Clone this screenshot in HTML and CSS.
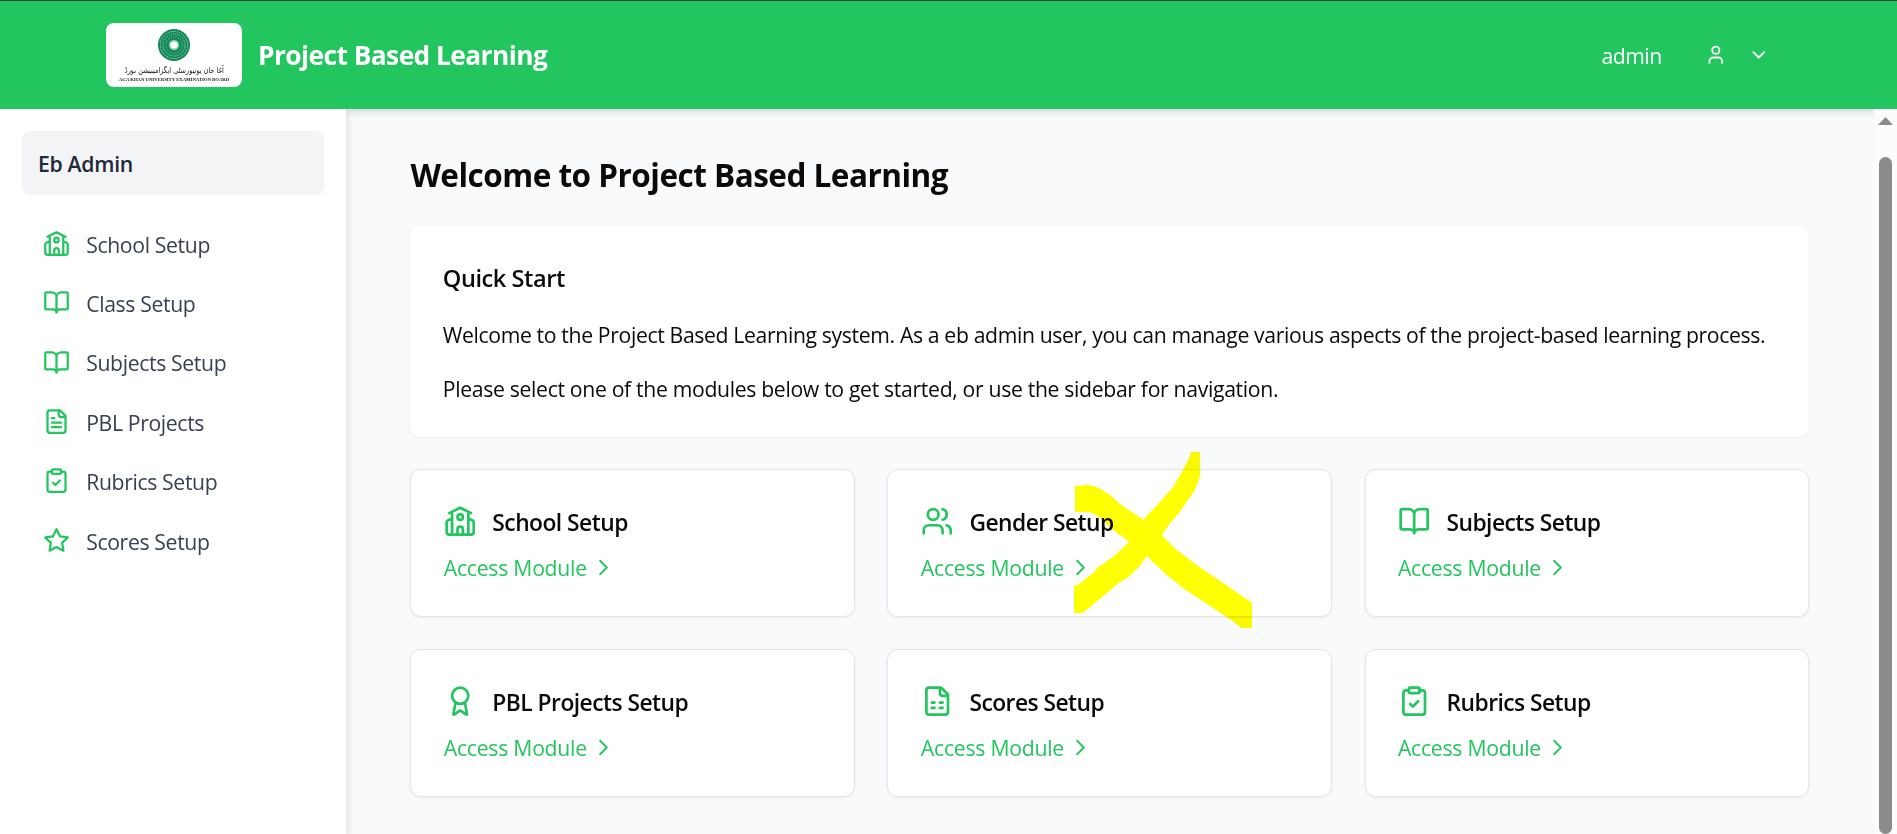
FILE: index.html
```html
<!DOCTYPE html>
<html lang="en">
<head>
<meta charset="utf-8">
<title>Project Based Learning</title>
<link rel="stylesheet" href="styles.css">
</head>
<body>
<svg class="defs" width="0" height="0" aria-hidden="true">
  <symbol id="school" viewBox="0 0 24 24"><path d="m4 6 8-4 8 4M18 10l3 1.3a1.6 1.6 0 0 1 1 1.500V20a2 2 0 0 1-2 2H4a2 2 0 0 1-2-2v-7.200a1.600 1.600 0 0 1 1-1.500L6 10M14 22v-4a2 2 0 0 0-4 0v4M18 5v17M6 5v17"/><circle cx="12" cy="9" r="2"/></symbol>
  <symbol id="book" viewBox="0 0 24 24"><path d="M12 7v14M3 18a1 1 0 0 1-1-1V4a1 1 0 0 1 1-1h5a4 4 0 0 1 4 4 4 4 0 0 1 4-4h5a1 1 0 0 1 1 1v13a1 1 0 0 1-1 1h-6a3 3 0 0 0-3 3 3 3 0 0 0-3-3z"/></symbol>
  <symbol id="file-text" viewBox="0 0 24 24"><path d="M15 2H6a2 2 0 0 0-2 2v16a2 2 0 0 0 2 2h12a2 2 0 0 0 2-2V7ZM14 2v4a2 2 0 0 0 2 2h4M10 9H8M16 13H8M16 17H8"/></symbol>
  <symbol id="sheet" viewBox="0 0 24 24"><path d="M15 2H6a2 2 0 0 0-2 2v16a2 2 0 0 0 2 2h12a2 2 0 0 0 2-2V7ZM14 2v4a2 2 0 0 0 2 2h4M8 13h2M14 13h2M8 17h2M14 17h2"/></symbol>
  <symbol id="clipboard" viewBox="0 0 24 24"><rect x="8" y="2" width="8" height="4" rx="1"/><path d="M16 4h2a2 2 0 0 1 2 2v14a2 2 0 0 1-2 2H6a2 2 0 0 1-2-2V6a2 2 0 0 1 2-2h2M9 14l2 2 4-4"/></symbol>
  <symbol id="star" viewBox="0 0 24 24"><polygon points="12 2 15.09 8.26 22 9.27 17 14.14 18.18 21.02 12 17.77 5.82 21.02 7 14.14 2 9.27 8.91 8.26"/></symbol>
  <symbol id="users" viewBox="0 0 24 24"><path d="M16 21v-2a4 4 0 0 0-4-4H6a4 4 0 0 0-4 4v2M22 21v-2a4 4 0 0 0-3-3.870M16 3.130a4 4 0 0 1 0 7.750"/><circle cx="9" cy="7" r="4"/></symbol>
  <symbol id="award" viewBox="0 0 24 24"><path d="m15.477 12.890 1.515 8.526a.5.5 0 0 1-.81.47l-3.580-2.687a1 1 0 0 0-1.197 0l-3.586 2.686a.5.5 0 0 1-.81-.469l1.514-8.526"/><circle cx="12" cy="8" r="6"/></symbol>
  <symbol id="user" viewBox="0 0 24 24"><path d="M19 21v-2a4 4 0 0 0-4-4H9a4 4 0 0 0-4 4v2"/><circle cx="12" cy="7" r="4"/></symbol>
  <symbol id="down" viewBox="0 0 24 24"><path d="m6 9 6 6 6-6"/></symbol>
  <symbol id="right" viewBox="0 0 24 24"><path d="m9 18 6-6-6-6"/></symbol>
</svg>

<header class="header">
  <div class="logo">
    <svg class="seal" width="32" height="32" viewBox="52 5.700 32 32">
      <circle cx="68" cy="21.700" r="16" fill="#128a57"/>
      <g fill="none" stroke="#b5dccb" stroke-width="1">
        <circle cx="68" cy="21.700" r="13.600" stroke-dasharray="1.200 1.100"/>
        <circle cx="68" cy="21.700" r="11" stroke-dasharray="1 1.200"/>
        <circle cx="68" cy="21.700" r="8.200" stroke-width=".7" stroke-dasharray="1 1.500"/>
      </g>
      <circle cx="68" cy="21.700" r="5.200" fill="#8ccbb0"/>
      <circle cx="68" cy="21.700" r="3.500" fill="#fff"/>
    </svg>
    <div class="logo-urdu" dir="rtl" lang="ur">آغا خان یونیورسٹی ایگزامینیشن بورڈ</div>
    <div class="logo-name">AGA KHAN UNIVERSITY EXAMINATION BOARD</div>
  </div>
  <div class="brand">Project Based Learning</div>
  <div class="account">
    <span class="account-name">admin</span>
    <svg class="icon icon-sm"><use href="#user"/></svg>
    <svg class="icon icon-sm"><use href="#down"/></svg>
  </div>
</header>

<div class="body">
  <aside class="sidebar">
    <div class="role">Eb Admin</div>
    <nav class="nav">
      <a class="nav-item"><svg class="icon icon-md"><use href="#school"/></svg><span>School Setup</span></a>
      <a class="nav-item"><svg class="icon icon-md"><use href="#book"/></svg><span>Class Setup</span></a>
      <a class="nav-item"><svg class="icon icon-md"><use href="#book"/></svg><span>Subjects Setup</span></a>
      <a class="nav-item"><svg class="icon icon-md"><use href="#file-text"/></svg><span>PBL Projects</span></a>
      <a class="nav-item"><svg class="icon icon-md"><use href="#clipboard"/></svg><span>Rubrics Setup</span></a>
      <a class="nav-item"><svg class="icon icon-md"><use href="#star"/></svg><span>Scores Setup</span></a>
    </nav>
  </aside>

  <main class="main">
    <h1 class="title">Welcome to Project Based Learning</h1>
    <section class="intro">
      <h2 class="intro-title">Quick Start</h2>
      <p class="intro-text">Welcome to the Project Based Learning system. As a eb admin user, you can manage various aspects of the project-based learning process.</p>
      <p class="intro-text intro-hint">Please select one of the modules below to get started, or use the sidebar for navigation.</p>
    </section>
    <section class="modules">
      <article class="card"><h3 class="card-title"><svg class="icon icon-lg"><use href="#school"/></svg><span>School Setup</span></h3><a class="card-link"><span>Access Module</span><svg class="icon icon-link"><use href="#right"/></svg></a></article>
      <article class="card"><h3 class="card-title"><svg class="icon icon-lg"><use href="#users"/></svg><span>Gender Setup</span></h3><a class="card-link"><span>Access Module</span><svg class="icon icon-link"><use href="#right"/></svg></a>
        <svg class="cross" viewBox="0 0 600 600"><path d="M15 138L30 137Q60 131 85 143L120 165 150 192 220 239 275 180 310 140 340 88 355 60 363 36H390V110L375 150 325 222 300 250 275 286 320 330 380 375 546 488V564H515L480 538 340 445 290 405 230 348 210 378 175 412 145 430 60 502 38 519H12V438L22 436 70 398 82 383 130 350 178 305 130 270 80 226 57 216H15Z"/></svg>
      </article>
      <article class="card"><h3 class="card-title"><svg class="icon icon-lg"><use href="#book"/></svg><span>Subjects Setup</span></h3><a class="card-link"><span>Access Module</span><svg class="icon icon-link"><use href="#right"/></svg></a></article>
      <article class="card"><h3 class="card-title"><svg class="icon icon-lg"><use href="#award"/></svg><span>PBL Projects Setup</span></h3><a class="card-link"><span>Access Module</span><svg class="icon icon-link"><use href="#right"/></svg></a></article>
      <article class="card"><h3 class="card-title"><svg class="icon icon-lg"><use href="#sheet"/></svg><span>Scores Setup</span></h3><a class="card-link"><span>Access Module</span><svg class="icon icon-link"><use href="#right"/></svg></a></article>
      <article class="card"><h3 class="card-title"><svg class="icon icon-lg"><use href="#clipboard"/></svg><span>Rubrics Setup</span></h3><a class="card-link"><span>Access Module</span><svg class="icon icon-link"><use href="#right"/></svg></a></article>
    </section>
  </main>

  <div class="scrollbar"><div class="scroll-up"></div><div class="scroll-thumb"></div></div>
</div>
</body>
</html>
```
FILE: styles.css
```css
* { box-sizing: border-box; margin: 0; }
body {
  height: 834px;
  overflow: hidden;
  display: flex;
  flex-direction: column;
  border-top: 1px solid #3f4143;
  background: #f9fafb;
  color: #0c0a09;
  font: 400 21.2px/32.4px "Open Sans", "Noto Sans", sans-serif;
  letter-spacing: -0.36px;
}
.defs { position: absolute; }
.icon {
  flex: none;
  fill: none;
  stroke: currentColor;
  stroke-width: 2;
  stroke-linecap: round;
  stroke-linejoin: round;
}
.icon-sm { width: 21.6px; height: 21.6px; }
.icon-md { width: 27px; height: 27px; color: #22c55e; }
.icon-lg { width: 32.4px; height: 32.4px; color: #22c55e; }
.icon-link { width: 27px; height: 27px; stroke-width: 1.6; }

.header {
  flex: none;
  height: 108px;
  display: flex;
  align-items: center;
  padding: 0 127px 0 106px;
  background: #22c55e;
  color: #fff;
}
.logo {
  width: 136px;
  height: 64px;
  display: flex;
  flex-direction: column;
  align-items: center;
  padding-top: 5.5px;
  border-radius: 8px;
  background: #fff;
  color: #222;
  white-space: nowrap;
}
.seal { flex: none; }
.logo-urdu {
  margin-top: 2px;
  font: 400 8.5px/14px "DejaVu Sans", sans-serif;
  letter-spacing: 0;
  transform: scaleX(.77);
}
.logo-name {
  font: 700 4.8px/6px "Liberation Serif", serif;
  letter-spacing: -0.05px;
}
.brand {
  margin-left: 16px;
  font-size: 26.3px;
  font-weight: 700;
  letter-spacing: -0.55px;
}
.account { margin-left: auto; display: flex; align-items: center; }
.account-name { margin-right: 43.5px; padding-top: 2px; letter-spacing: -0.5px; }
.account .icon + .icon { margin-left: 21.6px; }

.body { flex: 1; min-height: 0; display: flex; }
.sidebar {
  position: relative;
  z-index: 1;
  width: 346px;
  flex: none;
  padding: 22px;
  background: #fff;
  box-shadow: 2px 4px 8px rgba(0, 0, 0, .1);
  clip-path: inset(0 -12px 0 0);
}
.role {
  height: 64px;
  padding: 1px 16px 0;
  line-height: 64px;
  border-radius: 8px;
  background: #f3f4f6;
  color: #1f2937;
  font-weight: 600;
  letter-spacing: -0.3px;
}
.nav { padding: 18.6px 21px 0; }
.nav-item {
  height: 59.4px;
  display: flex;
  align-items: center;
  gap: 16.2px;
  color: #374151;
}
.nav-item span { padding-top: 3px; }

.main {
  flex: 1;
  padding: 43px 64.8px 0 64.4px;
  background: #f9fafb;
  box-shadow: inset 0 8px 8px -6px rgba(0, 0, 0, .16);
}
.title {
  padding-top: 1px;
  margin-bottom: 30px;
  font-size: 31.5px;
  font-weight: 700;
  line-height: 43px;
  letter-spacing: -0.51px;
}
.intro {
  padding: 33.4px 32.4px 31.4px;
  border-radius: 10.8px;
  background: #fff;
  box-shadow: 0 1px 3px rgba(0, 0, 0, .06);
}
.intro-title {
  padding-top: 1px;
  margin-bottom: -1px;
  font-size: 23.6px;
  font-weight: 600;
  line-height: 37.8px;
  letter-spacing: -0.45px;
}
.intro-text { margin-top: 21.6px; white-space: nowrap; }
.intro-hint { letter-spacing: -0.33px; }
.modules {
  margin-top: 32.4px;
  display: grid;
  grid-template-columns: repeat(3, 1fr);
  gap: 32.4px;
}
.card {
  position: relative;
  padding: 32.4px;
  border: 1px solid #e5e5e5;
  border-radius: 10.8px;
  background: #fff;
  box-shadow: 0 1px 3px rgba(0, 0, 0, .06);
}
.card-title {
  height: 37.8px;
  display: flex;
  align-items: center;
  gap: 16.2px;
  font-size: 22.8px;
  font-weight: 600;
  letter-spacing: -0.53px;
}
.card-title span { padding-top: 3px; }
.card-link {
  height: 32.4px;
  margin-top: 10.8px;
  display: flex;
  align-items: center;
  gap: 3px;
  color: #22c55e;
  letter-spacing: -0.25px;
}
.card-link span { padding-top: 2px; }
.cross {
  position: absolute;
  left: 182px;
  top: -30px;
  width: 200px;
  height: 200px;
  fill: #ff0;
  mix-blend-mode: multiply;
}

.scrollbar {
  width: 23px;
  flex: none;
  display: flex;
  flex-direction: column;
  align-items: center;
  padding-top: 8px;
  background: #fcfcfc;
}
.scroll-up {
  width: 15px;
  height: 8px;
  background: #8b8b8b;
  clip-path: polygon(50% 0, 100% 100%, 0 100%);
}
.scroll-thumb { flex: 1; width: 13px; margin-top: 32px; border-radius: 6.5px; background: #8b8b8b; }
```
